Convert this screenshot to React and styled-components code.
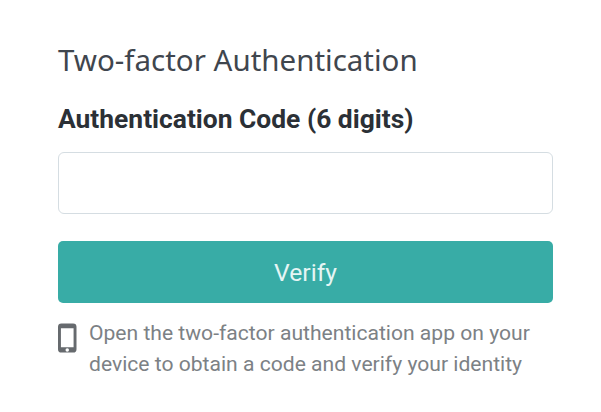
import styled, { createGlobalStyle } from 'styled-components';

const GlobalStyle = createGlobalStyle`
  html, body {
    margin: 0;
    padding: 0;
    background: #fff;
  }
`;

const Page = styled.div`
  width: 601px;
  height: 412px;
  box-sizing: border-box;
  padding: 40px 48px 0 58px;
  overflow: hidden;
  font-family: Roboto, sans-serif;
`;

const Title = styled.h1`
  margin: 0;
  font-family: "Noto Sans", sans-serif;
  font-size: 29.5px;
  line-height: 40px;
  font-weight: 400;
  color: #3f464e;
`;

const Label = styled.label`
  display: block;
  margin-top: 23px;
  font-size: 26.4px;
  line-height: 32px;
  font-weight: 700;
  color: #2b3036;
`;

const CodeInput = styled.input`
  display: block;
  box-sizing: border-box;
  width: 495px;
  height: 62px;
  margin-top: 17px;
  border: 1px solid #d5dde2;
  border-radius: 6px;
  background: #fff;
`;

const VerifyButton = styled.button`
  display: block;
  width: 495px;
  height: 62px;
  margin-top: 27px;
  border: 0;
  border-radius: 5px;
  background: #38aca6;
  color: #e6f5f4;
  font-family: Roboto, sans-serif;
  font-size: 24.7px;
`;

const Hint = styled.div`
  display: flex;
  gap: 12.5px;
  margin-top: 14px;
`;

const HintIcon = styled.svg`
  flex: none;
  width: 18.500px;
  height: 30px;
  margin-top: 6px;
`;

const HintText = styled.p`
  margin: 0;
  font-size: 21.1px;
  line-height: 31px;
  color: #7c8185;
`;

export default function App() {
  return (
    <>
      <GlobalStyle />
      <Page>
        <Title>Two-factor Authentication</Title>
        <Label htmlFor="code">Authentication Code (6 digits)</Label>
        <CodeInput id="code" />
        <VerifyButton>Verify</VerifyButton>
        <Hint>
          <HintIcon viewBox="0 0 19 30">
            <path
              fill="#666a6e"
              fillRule="evenodd"
              d="M3.5 0h12A3.5 3.5 0 0 1 19 3.500v23a3.500 3.500 0 0 1-3.500 3.500h-12A3.500 3.500 0 0 1 0 26.500v-23A3.500 3.500 0 0 1 3.500 0zM3 5v19.500h13V5zM9.500 25.500a1.800 1.800 0 1 0 0 3.600 1.800 1.800 0 0 0 0-3.600z"
            />
          </HintIcon>
          <HintText>
            Open the two-factor authentication app on your
            <br />
            device to obtain a code and verify your identity
          </HintText>
        </Hint>
      </Page>
    </>
  );
}
